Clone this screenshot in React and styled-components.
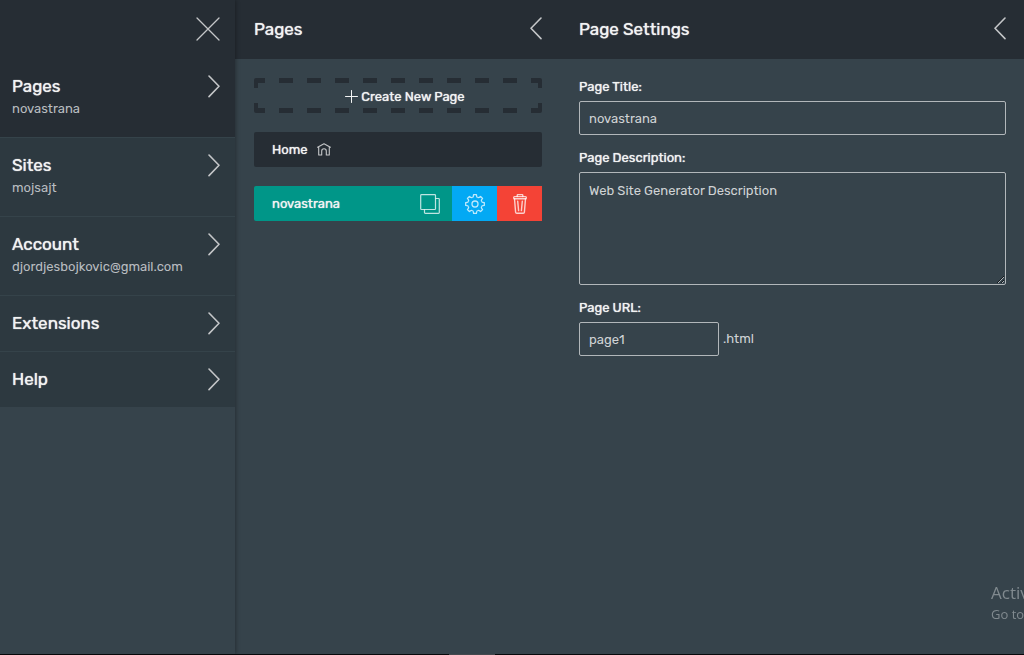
import { useState } from "react";
import styled, { createGlobalStyle, ThemeProvider } from "styled-components";

const theme = {
    fonts: {
        main: 'Rubik, Roboto, "Liberation Sans", sans-serif',
        system: '"Segoe UI", "Open Sans", sans-serif',
    },
    colors: {
        body: "#36434b",
        dark: "#262d34",
        item: "#2d3940",
        line: "#35434a",
        text: "#f2f3f3",
        muted: "#b9bdc0",
        icon: "#c4c6c8",
        border: "#b2b7ba",
        teal: "#009688",
        blue: "#03a9f4",
        red: "#f44336",
    },
    glow: "0 0 1px currentColor",
};

const GlobalStyle = createGlobalStyle`
    * {
        box-sizing: border-box;
    }
    body {
        margin: 0;
        background-color: ${p => p.theme.colors.body};
        color: ${p => p.theme.colors.text};
        font-family: ${p => p.theme.fonts.main};
        font-size: 13px;
        line-height: 22px;
        overflow: hidden;
    }
    button, input, textarea {
        font: inherit;
    }
    svg {
        display: block;
        fill: none;
        stroke: currentColor;
    }
`;

const Layout = styled.div`
    display: flex;
    min-height: 100vh;
    border-bottom: 1px solid #08090b;
`;

const Sidebar = styled.aside`
    position: relative;
    flex: 0 0 235px;
    box-shadow: 1px 0 4px rgba(0, 0, 0, 0.3);
`;

const SidebarTop = styled.div`
    display: flex;
    justify-content: flex-end;
    align-items: center;
    height: 58px;
    padding-right: 15px;
    background-color: ${p => p.theme.colors.dark};
`;

const IconButton = styled.button`
    display: flex;
    padding: 0;
    border: none;
    background: none;
    color: ${p => p.theme.colors.icon};
    cursor: pointer;
`;

const MenuItem = styled.button`
    display: flex;
    justify-content: space-between;
    align-items: flex-start;
    width: 100%;
    padding: 15px 15px 16px 12px;
    border: none;
    border-top: 1px solid ${p => (p.$active ? p.theme.colors.dark : p.theme.colors.line)};
    background-color: ${p => (p.$active ? p.theme.colors.dark : p.theme.colors.item)};
    color: ${p => p.theme.colors.icon};
    text-align: left;
    cursor: pointer;
    svg {
        margin-top: 1px;
    }
`;

const MenuTitle = styled.span`
    display: block;
    color: ${p => p.theme.colors.text};
    font-size: 17px;
    line-height: 24px;
    text-shadow: ${p => p.theme.glow};
`;

const MenuNote = styled.span`
    display: block;
    padding-bottom: 2px;
    color: ${p => p.theme.colors.muted};
    line-height: 21px;
`;

const Panel = styled.section`
    flex: ${p => (p.$wide ? "1 1 0" : "0 0 325px")};
    min-width: 0;
`;

const PanelHeader = styled.header`
    display: flex;
    justify-content: space-between;
    align-items: center;
    height: 59px;
    padding: 0 18px 2px 19px;
    background-color: ${p => p.theme.colors.dark};
`;

const PanelTitle = styled.h2`
    margin: 0;
    font-size: 17px;
    font-weight: 400;
    line-height: 24px;
    text-shadow: ${p => p.theme.glow};
`;

const PageList = styled.div`
    display: flex;
    flex-direction: column;
    gap: 19px;
    padding: 19px 18px 19px 19px;
`;

/* wide dashes with solid corners, which border-style: dashed does not give */
const CreateButton = styled.button`
    display: flex;
    justify-content: center;
    align-items: center;
    gap: 3px;
    height: 35px;
    padding: 2px 0 0 14px;
    border: none;
    border-radius: 2px;
    color: ${p => p.theme.colors.text};
    text-shadow: ${p => p.theme.glow};
    cursor: pointer;
    --dash: ${p => p.theme.colors.dark};
    --row: linear-gradient(90deg, transparent 7px, var(--dash) 7px 21px, transparent 21px);
    --side: linear-gradient(var(--dash) 10px, transparent 10px 25px, var(--dash) 25px);
    background:
        var(--row) center top / 28px 5px repeat-x,
        var(--row) center bottom / 28px 5px repeat-x,
        var(--side) left top / 4px 100% no-repeat,
        var(--side) right top / 4px 100% no-repeat;
`;

const PageRow = styled.div`
    display: flex;
    height: 35px;
    border-radius: ${p => (p.$active ? "2px 0 0 2px" : "2px")};
    background-color: ${p => (p.$active ? p.theme.colors.teal : p.theme.colors.dark)};
`;

const PageName = styled.a`
    display: flex;
    flex: 1;
    align-items: center;
    gap: 9px;
    padding-left: 18px;
    color: ${p => p.theme.colors.text};
    text-decoration: none;
    text-shadow: ${p => p.theme.glow};
    svg {
        color: ${p => p.theme.colors.icon};
    }
`;

const RowAction = styled.button`
    display: flex;
    justify-content: center;
    align-items: center;
    width: 45px;
    padding: 0;
    border: none;
    background-color: ${p => (p.$color ? p.theme.colors[p.$color] : "transparent")};
    color: rgba(255, 255, 255, 0.75);
    cursor: pointer;
`;

const Form = styled.form`
    display: flex;
    flex-direction: column;
    gap: 12px;
    padding: 17px 18px 17px 19px;
`;

const Field = styled.div`
    display: flex;
    flex-direction: column;
    gap: 3px;
`;

const Label = styled.label`
    align-self: flex-start;
    text-shadow: ${p => p.theme.glow};
`;

const Input = styled.input`
    width: ${p => (p.$short ? "140px" : "100%")};
    height: 34px;
    padding: 0 9px;
    border: 1px solid ${p => p.theme.colors.border};
    border-radius: 2px;
    background: none;
    color: #d0d3d5;
    outline: none;
`;

const TextArea = styled.textarea`
    display: block;
    width: 100%;
    height: 113px;
    padding: 7px 9px;
    border: 1px solid ${p => p.theme.colors.border};
    border-radius: 2px;
    background: none;
    color: #d0d3d5;
    outline: none;
    resize: vertical;
`;

const UrlRow = styled.div`
    display: flex;
    align-items: center;
    gap: 4px;
    color: #d0d3d5;
`;

const Watermark = styled.div`
    position: fixed;
    right: 0;
    bottom: 31px;
    width: 33px;
    overflow: hidden;
    color: #818a8f;
    font-family: ${p => p.theme.fonts.system};
    font-size: 13px;
    line-height: 20px;
    white-space: nowrap;
    p {
        margin: 0;
    }
    p:first-child {
        font-size: 17px;
        line-height: 22px;
    }
`;

const TaskMark = styled.div`
    position: fixed;
    left: 449px;
    bottom: 0;
    width: 46px;
    height: 1px;
    background-color: #45494e;
`;

const CloseIcon = () => (
    <svg width="24" height="24" viewBox="0 0 24 24" strokeWidth="1.3" strokeLinecap="round">
        <path d="M1 1l22 22M23 1L1 23" />
    </svg>
);

const ChevronIcon = ({ left }) => (
    <svg width="12" height="23" viewBox="0 0 12 23" strokeWidth="1.6" strokeLinecap="round" strokeLinejoin="round">
        <path d={left ? "M11 1L1 11.3 11 21.6" : "M1 1l10 10.3L1 21.6"} />
    </svg>
);

const PlusIcon = () => (
    <svg width="13" height="13" viewBox="0 0 13 13" strokeWidth="1" strokeLinecap="round">
        <path d="M6.5.5v12M.5 6.5h12" />
    </svg>
);

const HomeIcon = () => (
    <svg width="14" height="13" viewBox="0 0 14 13" strokeWidth="1.1" strokeLinecap="round" strokeLinejoin="round">
        <path d="M.6 4.2L7 .7l6.4 3.5M1.7 3.8V12h3V8a2.3 2.3 0 0 1 4.6 0v4h3V3.8" />
    </svg>
);

const CopyIcon = () => (
    <svg width="20" height="20" viewBox="0 0 20 20" strokeWidth="1.2" strokeLinejoin="round">
        <rect x=".7" y=".7" width="14.8" height="14.8" rx=".8" />
        <path d="M18 4.5h.5a.8.8 0 0 1 .8.8v13.2a.8.8 0 0 1-.8.8H5.3a.8.8 0 0 1-.8-.8V18M15.5 4.5H18M4.5 15.5V18" />
    </svg>
);

const teeth = [0, 45, 90, 135, 180, 225, 270, 315];

const GearIcon = () => (
    <svg width="20" height="20" viewBox="-10 -10 20 20" strokeWidth="1.3" strokeLinejoin="round">
        <circle r="3" />
        {teeth.map(angle => (
            <path
                key={angle}
                transform={`rotate(${angle})`}
                d="M-2.7 -6.5Q-1.8 -6.9 -1.7 -7.7L-1.4 -9.3H1.4L1.7 -7.7Q1.8 -6.9 2.7 -6.5"
            />
        ))}
    </svg>
);

const TrashIcon = () => (
    <svg width="14" height="20" viewBox="0 0 14 20" strokeWidth="1.4" strokeLinecap="round" strokeLinejoin="round">
        <path d="M4.2 2.6V1.4a.8.8 0 0 1 .8-.8h4a.8.8 0 0 1 .8.8v1.2" />
        <rect x=".7" y="2.6" width="12.6" height="2.2" rx=".8" />
        <path d="M1.5 4.8l1.1 13.4a1.2 1.2 0 0 0 1.2 1.1h6.4a1.2 1.2 0 0 0 1.2-1.1l1.1-13.4M4.7 7.2l.9 9.4M9.3 7.2l-.9 9.4" />
    </svg>
);

const menu = [
    { title: "Pages", note: "novastrana" },
    { title: "Sites", note: "mojsajt" },
    { title: "Account", note: "djordjesbojkovic@gmail.com" },
    { title: "Extensions" },
    { title: "Help" },
];

export default function App() {
    const [section, setSection] = useState("Pages");

    return (
        <ThemeProvider theme={theme}>
            <GlobalStyle />
            <Layout>
                <Sidebar>
                    <SidebarTop>
                        <IconButton type="button" aria-label="Close"><CloseIcon /></IconButton>
                    </SidebarTop>
                    <nav>
                        {menu.map(({ title, note }) => (
                            <MenuItem key={title} type="button" $active={title === section} onClick={() => setSection(title)}>
                                <span>
                                    <MenuTitle>{title}</MenuTitle>
                                    {note && <MenuNote>{note}</MenuNote>}
                                </span>
                                <ChevronIcon />
                            </MenuItem>
                        ))}
                    </nav>
                </Sidebar>

                <Panel>
                    <PanelHeader>
                        <PanelTitle>Pages</PanelTitle>
                        <IconButton type="button" aria-label="Back"><ChevronIcon left /></IconButton>
                    </PanelHeader>
                    <PageList>
                        <CreateButton type="button"><PlusIcon />Create New Page</CreateButton>
                        <PageRow>
                            <PageName href="#home">Home <HomeIcon /></PageName>
                        </PageRow>
                        <PageRow $active>
                            <PageName href="#novastrana">novastrana</PageName>
                            <RowAction type="button" aria-label="Duplicate"><CopyIcon /></RowAction>
                            <RowAction type="button" aria-label="Settings" $color="blue"><GearIcon /></RowAction>
                            <RowAction type="button" aria-label="Delete" $color="red"><TrashIcon /></RowAction>
                        </PageRow>
                    </PageList>
                </Panel>

                <Panel $wide>
                    <PanelHeader>
                        <PanelTitle>Page Settings</PanelTitle>
                        <IconButton type="button" aria-label="Back"><ChevronIcon left /></IconButton>
                    </PanelHeader>
                    <Form>
                        <Field>
                            <Label htmlFor="title">Page Title:</Label>
                            <Input id="title" type="text" defaultValue="novastrana" />
                        </Field>
                        <Field>
                            <Label htmlFor="description">Page Description:</Label>
                            <TextArea id="description" defaultValue="Web Site Generator Description" />
                        </Field>
                        <Field>
                            <Label htmlFor="url">Page URL:</Label>
                            <UrlRow>
                                <Input id="url" type="text" $short defaultValue="page1" />
                                <span>.html</span>
                            </UrlRow>
                        </Field>
                    </Form>
                </Panel>
            </Layout>
            <Watermark>
                <p>Activ</p>
                <p>Go to</p>
            </Watermark>
            <TaskMark />
        </ThemeProvider>
    );
}
